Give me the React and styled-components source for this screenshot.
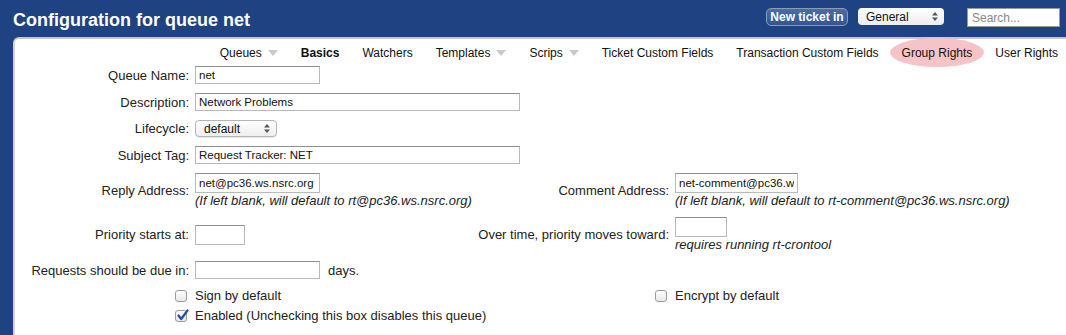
import styled, { createGlobalStyle } from 'styled-components';

const GlobalStyle = createGlobalStyle`
	body {
		margin: 0;
		background: #1e4282;
		font-family: 'Liberation Sans', Arial, sans-serif;
	}
	* {
		box-sizing: border-box;
	}
`;

const navItems = [
	{ label: 'Queues', menu: true },
	{ label: 'Basics', current: true },
	{ label: 'Watchers' },
	{ label: 'Templates', menu: true },
	{ label: 'Scrips', menu: true },
	{ label: 'Ticket Custom Fields' },
	{ label: 'Transaction Custom Fields' },
	{ label: 'Group Rights', hover: true },
	{ label: 'User Rights' },
];

const UpDown = () => (
	<svg width="6" height="9" viewBox="0 0 6 9">
		<path d="M3 0 L6 3.5 H0 Z M3 9 L6 5.5 H0 Z" fill="#555" />
	</svg>
);

const MenuArrow = () => (
	<svg width="10" height="6" viewBox="0 0 10 6">
		<path d="M0 0 H10 L5 6 Z" fill="#c9c9c9" />
	</svg>
);

const Check = ({ checked }) => (
	<Box>
		{checked && (
			<svg width="13" height="13" viewBox="0 0 13 13">
				<path d="M2.5 6.5 L5.2 10 L11.5 1.5" fill="none" stroke="#1f4fa8" strokeWidth="2.2" strokeLinecap="round" strokeLinejoin="round" />
			</svg>
		)}
	</Box>
);

const App = () => {
	return (
		<>
			<GlobalStyle />
			<Header>
				<Title>Configuration for queue net</Title>
				<Tools>
					<NewTicket>New ticket in</NewTicket>
					<HeaderSelect>
						General
						<UpDown />
					</HeaderSelect>
					<Search placeholder="Search..." />
				</Tools>
			</Header>
			<Panel>
				<Nav>
					{navItems.map(item => (
						<NavItem key={item.label} $current={item.current} $hover={item.hover}>
							{item.label}
							{item.menu && <MenuArrow />}
						</NavItem>
					))}
				</Nav>
				<Form>
					<Label>Queue Name:</Label>
					<Cell $span={3}>
						<Input $w={125} defaultValue="net" />
					</Cell>

					<Label>Description:</Label>
					<Cell $span={3}>
						<Input $w={325} defaultValue="Network Problems" />
					</Cell>

					<Label>Lifecycle:</Label>
					<Cell $span={3}>
						<SelectBox>
							default
							<UpDown />
						</SelectBox>
					</Cell>

					<Label>Subject Tag:</Label>
					<Cell $span={3}>
						<Input $w={325} defaultValue="Request Tracker: NET" />
					</Cell>

					<Label>Reply Address:</Label>
					<Cell>
						<Input $w={125} $h={20} defaultValue="net@pc36.ws.nsrc.org" />
						<Hint>(If left blank, will default to rt@pc36.ws.nsrc.org)</Hint>
					</Cell>
					<Label>Comment Address:</Label>
					<Cell>
						<Input $w={123} $h={20} defaultValue="net-comment@pc36.ws.nsrc.org" />
						<Hint>(If left blank, will default to rt-comment@pc36.ws.nsrc.org)</Hint>
					</Cell>

					<Label>Priority starts at:</Label>
					<Cell>
						<Input $w={50} $h={20} />
					</Cell>
					<Label>Over time, priority moves toward:</Label>
					<Cell>
						<Input $w={52} $h={20} />
						<Hint>requires running rt-crontool</Hint>
					</Cell>

					<Label>Requests should be due in:</Label>
					<Cell $span={3}>
						<Inline>
							<Input $w={125} />
							<Text>days.</Text>
						</Inline>
					</Cell>

					<BoxCell>
						<Check />
					</BoxCell>
					<Cell>
						<Text>Sign by default</Text>
					</Cell>
					<BoxCell>
						<Check />
					</BoxCell>
					<Cell>
						<Text>Encrypt by default</Text>
					</Cell>

					<BoxCell $tight>
						<Check checked />
					</BoxCell>
					<Cell $span={3} $tight>
						<Text>Enabled (Unchecking this box disables this queue)</Text>
					</Cell>
				</Form>
			</Panel>
		</>
	);
};
export default App;

const Header = styled.div`
	display: flex;
	align-items: flex-start;
	height: 37px;
	padding: 0 6px 0 13px;
`;
const Title = styled.h1`
	margin: 0;
	padding-top: 9px;
	font-size: 18px;
	line-height: 22px;
	font-weight: bold;
	color: #fff;
`;
const Tools = styled.div`
	display: flex;
	align-items: flex-start;
	margin-left: auto;
	padding-top: 8px;
`;
const NewTicket = styled.button`
	width: 82px;
	height: 18px;
	padding: 0;
	border: 1px solid #8d9ab3;
	border-radius: 5px;
	background: linear-gradient(#4c6ca8, #34568f);
	color: #fff;
	font-family: 'Liberation Sans', Arial, sans-serif;
	font-size: 12px;
	font-weight: bold;
	line-height: 16px;
`;
const HeaderSelect = styled.div`
	display: flex;
	align-items: center;
	justify-content: space-between;
	width: 86px;
	height: 17px;
	margin-left: 10px;
	padding: 0 6px 0 8px;
	border-radius: 4px;
	background: linear-gradient(#ffffff, #ececec);
	font-size: 12px;
	color: #111;
`;
const Search = styled.input`
	width: 93px;
	height: 19px;
	margin-left: 23px;
	padding: 0 4px;
	border: 1px solid #9a9a9a;
	background: #fff;
	font-family: 'Liberation Sans', Arial, sans-serif;
	font-size: 12px;
	&::placeholder {
		color: #888;
	}
`;
const Panel = styled.div`
	min-height: calc(100vh - 37px);
	margin-left: 13px;
	background: #fff;
	border-top: 2px solid #c6c6c6;
	border-left: 2px solid #d2d2d2;
	border-top-left-radius: 6px;
`;
const Nav = styled.div`
	display: flex;
	justify-content: flex-end;
	align-items: flex-start;
	height: 27px;
`;
const NavItem = styled.div`
	display: flex;
	align-items: center;
	gap: 6px;
	height: ${p => (p.$hover ? '29px' : '27px')};
	margin-top: ${p => (p.$hover ? '-1px' : '0')};
	padding: 0 11.5px;
	border-radius: 50%;
	background: ${p => (p.$hover ? '#f6c4c6' : 'transparent')};
	font-size: 12px;
	font-weight: ${p => (p.$current ? 'bold' : 'normal')};
	color: #111;
	white-space: nowrap;
	&:last-child {
		padding-right: 8px;
	}
`;
const Form = styled.div`
	display: grid;
	grid-template-columns: 174px 275px 193px 1fr;
	column-gap: 6px;
	row-gap: 9px;
	align-items: center;
`;
const Label = styled.div`
	text-align: right;
	font-size: 13px;
	color: #222;
	white-space: nowrap;
`;
const Cell = styled.div`
	grid-column: span ${p => p.$span || 1};
	display: flex;
	flex-direction: column;
	align-items: flex-start;
	white-space: nowrap;
	margin-top: ${p => (p.$tight ? '-4px' : '0')};
`;
const BoxCell = styled.div`
	display: flex;
	justify-content: flex-end;
	padding-right: 2px;
	margin-top: ${p => (p.$tight ? '-4px' : '0')};
`;
const Input = styled.input`
	width: ${p => p.$w}px;
	height: ${p => p.$h || 18}px;
	padding: 0 3px;
	border: 1px solid #b9b9b9;
	border-top-color: #8e8e8e;
	background: #fff;
	font-family: 'Liberation Sans', Arial, sans-serif;
	font-size: 11.5px;
	color: #111;
`;
const SelectBox = styled.div`
	display: flex;
	align-items: center;
	justify-content: space-between;
	width: 82px;
	height: 17px;
	padding: 0 6px 0 8px;
	border: 1px solid #b4b4b4;
	border-radius: 4px;
	background: linear-gradient(#ffffff, #eeeeee);
	box-shadow: 0 1px 1px rgba(0, 0, 0, 0.1);
	font-size: 12px;
	color: #111;
`;
const Hint = styled.div`
	font-size: 13px;
	line-height: 15px;
	font-style: italic;
	color: #222;
`;
const Inline = styled.div`
	display: flex;
	align-items: center;
	gap: 8px;
`;
const Text = styled.span`
	font-size: 13px;
	line-height: 15px;
	color: #222;
`;
const Box = styled.span`
	position: relative;
	display: inline-block;
	width: 12px;
	height: 12px;
	border: 1px solid #9c9c9c;
	border-radius: 3px;
	background: linear-gradient(#ffffff, #e6e6e6);
	svg {
		position: absolute;
		left: 0;
		top: -2px;
	}
`;
